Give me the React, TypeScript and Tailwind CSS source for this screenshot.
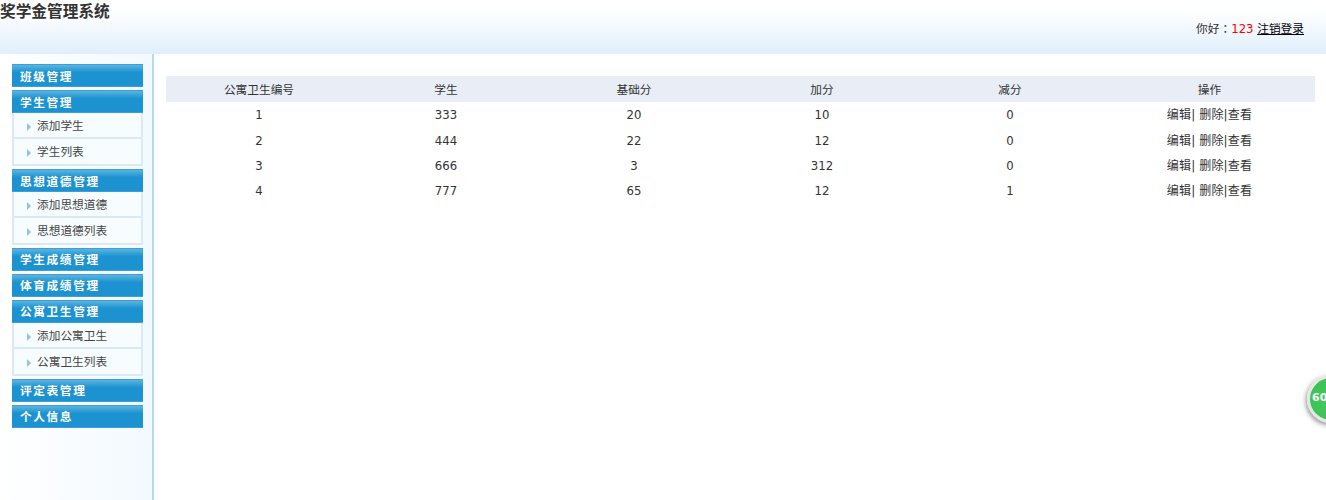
import React from "react";

const font = "[font-family:'DejaVu_Sans','Noto_Sans_CJK_SC',sans-serif]";

type Group = { title: string; items?: string[] };
const groups: Group[] = [
  { title: "班级管理" },
  { title: "学生管理", items: ["添加学生", "学生列表"] },
  { title: "思想道德管理", items: ["添加思想道德", "思想道德列表"] },
  { title: "学生成绩管理" },
  { title: "体育成绩管理" },
  { title: "公寓卫生管理", items: ["添加公寓卫生", "公寓卫生列表"] },
  { title: "评定表管理" },
  { title: "个人信息" },
];

const rows = [
  ["1", "333", "20", "10", "0"],
  ["2", "444", "22", "12", "0"],
  ["3", "666", "3", "312", "0"],
  ["4", "777", "65", "12", "1"],
];
const heads = ["公寓卫生编号", "学生", "基础分", "加分", "减分", "操作"];
const cols = "grid grid-cols-[186px_188px_188px_188px_188px_1fr]";

function MenuGroup({ g, upper }: { g: Group; upper: boolean }) {
  return (
    <div className="mb-[3px]">
      <div className={`h-[23px] pl-2 ${upper ? "pt-[4px]" : "pt-[3px]"} flex items-center text-[11.7px] font-bold tracking-[1.6px] text-white border-y border-[#3d9fd4] bg-[linear-gradient(#5ab5e0,#1c93d0_35%,#1c93d0)]`}>
        {g.title}
      </div>
      {g.items && (
        <div className="border-x-2 border-b-2 border-[#dce9f1] bg-[#f7fcff]">
          {g.items.map((it, i) => (
            <div
              key={it}
              className={`flex items-center pl-[13px] text-[11.7px] text-[#444] ${i === 0 ? "h-[26px] pt-[4px] border-b-2 border-[#dce9f1]" : "h-[25px] pt-[2px]"}`}
            >
              <span className="w-0 h-0 border-y-[4px] border-y-transparent border-l-[4px] border-l-[#8fc4e4] mr-[6px]" />
              {it}
            </div>
          ))}
        </div>
      )}
    </div>
  );
}

export default function App() {
  return (
    <div className={`relative w-[1326px] h-[500px] overflow-hidden bg-white ${font}`}>
      <header className="relative h-[54px] bg-[linear-gradient(#ffffff,#fdfeff_25%,#dfeffc)]">
        <h1 className="text-[15.7px] leading-[23px] font-bold text-[#333]">奖学金管理系统</h1>
        <div className="absolute right-[22px] top-[19px] text-[11.7px] leading-[18px] text-[#333]">
          你好<span className="[font-family:'Noto_Sans_CJK_TC',sans-serif]">：</span>
          <span className="text-[#ff0000]">123</span> <a className="text-black underline">注销登录</a>
        </div>
      </header>
      <div className="flex h-[446px]">
        <aside className="w-[154px] shrink-0 border-r-2 border-[#b9d8ea] bg-[linear-gradient(90deg,#ffffff,#f2f9ff)] pt-[10px] pl-[12px] pr-[9px]">
          {groups.map((g, i) => (
            <MenuGroup key={g.title} g={g} upper={i < 3} />
          ))}
        </aside>
        <main className="flex-1 pt-[22px] pl-[12px] pr-[11px] text-[11.7px] text-[#333]">
          <div className={`${cols} h-[26px] pt-[3px] bg-[#e9eef6] items-center text-center`}>
            {heads.map((h) => (
              <div key={h}>{h}</div>
            ))}
          </div>
          {rows.map((r, idx) => (
            <div key={r[0]} className={`${cols} ${idx === 1 ? "h-[26px] pt-[4px]" : "h-[25px] pt-[2px]"} items-center text-center`}>
              {r.map((c, i) => (
                <div key={i}>{c}</div>
              ))}
              <div className="text-[12px] tracking-[0.15px] pb-[2px]">编辑|&nbsp;删除|查看</div>
            </div>
          ))}
        </main>
      </div>
      <div className="absolute left-[1307px] top-[375px] w-[48px] h-[48px] rounded-full border-[3px] border-[#e4e8e4] bg-[radial-gradient(circle_at_50%_60%,#45c95f,#3cc254_70%,#7bd98a)] shadow-[-1px_2px_5px_rgba(0,0,0,0.45)] flex items-center pl-[2px] pb-[4px]">
        <span className="text-[11px] font-bold text-white leading-none">60</span>
      </div>
    </div>
  );
}
